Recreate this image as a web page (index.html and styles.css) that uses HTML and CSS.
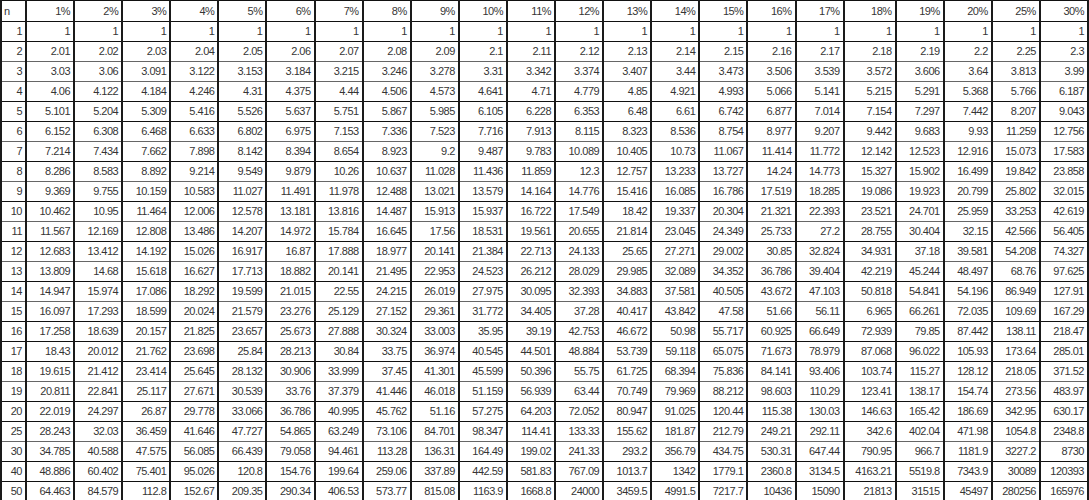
FILE: index.html
```html
<!DOCTYPE html>
<html>
<head>
<meta charset="utf-8">
<link rel="stylesheet" href="styles.css">
</head>
<body>
<table class="grid">
<colgroup><col class="c-n"><col><col><col><col><col><col><col><col><col><col><col><col><col><col><col><col><col><col class="c-wide"><col><col><col><col></colgroup>
<thead>
<tr class="head"><th class="n">n</th><th>1%</th><th>2%</th><th>3%</th><th>4%</th><th>5%</th><th>6%</th><th>7%</th><th>8%</th><th>9%</th><th>10%</th><th>11%</th><th>12%</th><th>13%</th><th>14%</th><th>15%</th><th>16%</th><th>17%</th><th>18%</th><th>19%</th><th>20%</th><th>25%</th><th>30%</th></tr>
</thead>
<tbody>
<tr class="dark"><td>1</td><td>1</td><td>1</td><td>1</td><td>1</td><td>1</td><td>1</td><td>1</td><td>1</td><td>1</td><td>1</td><td>1</td><td>1</td><td>1</td><td>1</td><td>1</td><td>1</td><td>1</td><td>1</td><td>1</td><td>1</td><td>1</td><td>1</td></tr>
<tr><td>2</td><td>2.01</td><td>2.02</td><td>2.03</td><td>2.04</td><td>2.05</td><td>2.06</td><td>2.07</td><td>2.08</td><td>2.09</td><td>2.1</td><td>2.11</td><td>2.12</td><td>2.13</td><td>2.14</td><td>2.15</td><td>2.16</td><td>2.17</td><td>2.18</td><td>2.19</td><td>2.2</td><td>2.25</td><td>2.3</td></tr>
<tr><td>3</td><td>3.03</td><td>3.06</td><td>3.091</td><td>3.122</td><td>3.153</td><td>3.184</td><td>3.215</td><td>3.246</td><td>3.278</td><td>3.31</td><td>3.342</td><td>3.374</td><td>3.407</td><td>3.44</td><td>3.473</td><td>3.506</td><td>3.539</td><td>3.572</td><td>3.606</td><td>3.64</td><td>3.813</td><td>3.99</td></tr>
<tr class="dark"><td>4</td><td>4.06</td><td>4.122</td><td>4.184</td><td>4.246</td><td>4.31</td><td>4.375</td><td>4.44</td><td>4.506</td><td>4.573</td><td>4.641</td><td>4.71</td><td>4.779</td><td>4.85</td><td>4.921</td><td>4.993</td><td>5.066</td><td>5.141</td><td>5.215</td><td>5.291</td><td>5.368</td><td>5.766</td><td>6.187</td></tr>
<tr class="dark"><td>5</td><td>5.101</td><td>5.204</td><td>5.309</td><td>5.416</td><td>5.526</td><td>5.637</td><td>5.751</td><td>5.867</td><td>5.985</td><td>6.105</td><td>6.228</td><td>6.353</td><td>6.48</td><td>6.61</td><td>6.742</td><td>6.877</td><td>7.014</td><td>7.154</td><td>7.297</td><td>7.442</td><td>8.207</td><td>9.043</td></tr>
<tr><td>6</td><td>6.152</td><td>6.308</td><td>6.468</td><td>6.633</td><td>6.802</td><td>6.975</td><td>7.153</td><td>7.336</td><td>7.523</td><td>7.716</td><td>7.913</td><td>8.115</td><td>8.323</td><td>8.536</td><td>8.754</td><td>8.977</td><td>9.207</td><td>9.442</td><td>9.683</td><td>9.93</td><td>11.259</td><td>12.756</td></tr>
<tr class="dark"><td>7</td><td>7.214</td><td>7.434</td><td>7.662</td><td>7.898</td><td>8.142</td><td>8.394</td><td>8.654</td><td>8.923</td><td>9.2</td><td>9.487</td><td>9.783</td><td>10.089</td><td>10.405</td><td>10.73</td><td>11.067</td><td>11.414</td><td>11.772</td><td>12.142</td><td>12.523</td><td>12.916</td><td>15.073</td><td>17.583</td></tr>
<tr><td>8</td><td>8.286</td><td>8.583</td><td>8.892</td><td>9.214</td><td>9.549</td><td>9.879</td><td>10.26</td><td>10.637</td><td>11.028</td><td>11.436</td><td>11.859</td><td>12.3</td><td>12.757</td><td>13.233</td><td>13.727</td><td>14.24</td><td>14.773</td><td>15.327</td><td>15.902</td><td>16.499</td><td>19.842</td><td>23.858</td></tr>
<tr class="dark"><td>9</td><td>9.369</td><td>9.755</td><td>10.159</td><td>10.583</td><td>11.027</td><td>11.491</td><td>11.978</td><td>12.488</td><td>13.021</td><td>13.579</td><td>14.164</td><td>14.776</td><td>15.416</td><td>16.085</td><td>16.786</td><td>17.519</td><td>18.285</td><td>19.086</td><td>19.923</td><td>20.799</td><td>25.802</td><td>32.015</td></tr>
<tr><td>10</td><td>10.462</td><td>10.95</td><td>11.464</td><td>12.006</td><td>12.578</td><td>13.181</td><td>13.816</td><td>14.487</td><td>15.913</td><td>15.937</td><td>16.722</td><td>17.549</td><td>18.42</td><td>19.337</td><td>20.304</td><td>21.321</td><td>22.393</td><td>23.521</td><td>24.701</td><td>25.959</td><td>33.253</td><td>42.619</td></tr>
<tr class="dark"><td>11</td><td>11.567</td><td>12.169</td><td>12.808</td><td>13.486</td><td>14.207</td><td>14.972</td><td>15.784</td><td>16.645</td><td>17.56</td><td>18.531</td><td>19.561</td><td>20.655</td><td>21.814</td><td>23.045</td><td>24.349</td><td>25.733</td><td>27.2</td><td>28.755</td><td>30.404</td><td>32.15</td><td>42.566</td><td>56.405</td></tr>
<tr><td>12</td><td>12.683</td><td>13.412</td><td>14.192</td><td>15.026</td><td>16.917</td><td>16.87</td><td>17.888</td><td>18.977</td><td>20.141</td><td>21.384</td><td>22.713</td><td>24.133</td><td>25.65</td><td>27.271</td><td>29.002</td><td>30.85</td><td>32.824</td><td>34.931</td><td>37.18</td><td>39.581</td><td>54.208</td><td>74.327</td></tr>
<tr class="dark"><td>13</td><td>13.809</td><td>14.68</td><td>15.618</td><td>16.627</td><td>17.713</td><td>18.882</td><td>20.141</td><td>21.495</td><td>22.953</td><td>24.523</td><td>26.212</td><td>28.029</td><td>29.985</td><td>32.089</td><td>34.352</td><td>36.786</td><td>39.404</td><td>42.219</td><td>45.244</td><td>48.497</td><td>68.76</td><td>97.625</td></tr>
<tr><td>14</td><td>14.947</td><td>15.974</td><td>17.086</td><td>18.292</td><td>19.599</td><td>21.015</td><td>22.55</td><td>24.215</td><td>26.019</td><td>27.975</td><td>30.095</td><td>32.393</td><td>34.883</td><td>37.581</td><td>40.505</td><td>43.672</td><td>47.103</td><td>50.818</td><td>54.841</td><td>54.196</td><td>86.949</td><td>127.91</td></tr>
<tr class="dark"><td>15</td><td>16.097</td><td>17.293</td><td>18.599</td><td>20.024</td><td>21.579</td><td>23.276</td><td>25.129</td><td>27.152</td><td>29.361</td><td>31.772</td><td>34.405</td><td>37.28</td><td>40.417</td><td>43.842</td><td>47.58</td><td>51.66</td><td>56.11</td><td>6.965</td><td>66.261</td><td>72.035</td><td>109.69</td><td>167.29</td></tr>
<tr class="dark"><td>16</td><td>17.258</td><td>18.639</td><td>20.157</td><td>21.825</td><td>23.657</td><td>25.673</td><td>27.888</td><td>30.324</td><td>33.003</td><td>35.95</td><td>39.19</td><td>42.753</td><td>46.672</td><td>50.98</td><td>55.717</td><td>60.925</td><td>66.649</td><td>72.939</td><td>79.85</td><td>87.442</td><td>138.11</td><td>218.47</td></tr>
<tr class="dark"><td>17</td><td>18.43</td><td>20.012</td><td>21.762</td><td>23.698</td><td>25.84</td><td>28.213</td><td>30.84</td><td>33.75</td><td>36.974</td><td>40.545</td><td>44.501</td><td>48.884</td><td>53.739</td><td>59.118</td><td>65.075</td><td>71.673</td><td>78.979</td><td>87.068</td><td>96.022</td><td>105.93</td><td>173.64</td><td>285.01</td></tr>
<tr><td>18</td><td>19.615</td><td>21.412</td><td>23.414</td><td>25.645</td><td>28.132</td><td>30.906</td><td>33.999</td><td>37.45</td><td>41.301</td><td>45.599</td><td>50.396</td><td>55.75</td><td>61.725</td><td>68.394</td><td>75.836</td><td>84.141</td><td>93.406</td><td>103.74</td><td>115.27</td><td>128.12</td><td>218.05</td><td>371.52</td></tr>
<tr class="dark"><td>19</td><td>20.811</td><td>22.841</td><td>25.117</td><td>27.671</td><td>30.539</td><td>33.76</td><td>37.379</td><td>41.446</td><td>46.018</td><td>51.159</td><td>56.939</td><td>63.44</td><td>70.749</td><td>79.969</td><td>88.212</td><td>98.603</td><td>110.29</td><td>123.41</td><td>138.17</td><td>154.74</td><td>273.56</td><td>483.97</td></tr>
<tr class="dark"><td>20</td><td>22.019</td><td>24.297</td><td>26.87</td><td>29.778</td><td>33.066</td><td>36.786</td><td>40.995</td><td>45.762</td><td>51.16</td><td>57.275</td><td>64.203</td><td>72.052</td><td>80.947</td><td>91.025</td><td>120.44</td><td>115.38</td><td>130.03</td><td>146.63</td><td>165.42</td><td>186.69</td><td>342.95</td><td>630.17</td></tr>
<tr><td>25</td><td>28.243</td><td>32.03</td><td>36.459</td><td>41.646</td><td>47.727</td><td>54.865</td><td>63.249</td><td>73.106</td><td>84.701</td><td>98.347</td><td>114.41</td><td>133.33</td><td>155.62</td><td>181.87</td><td>212.79</td><td>249.21</td><td>292.11</td><td>342.6</td><td>402.04</td><td>471.98</td><td>1054.8</td><td>2348.8</td></tr>
<tr class="dark"><td>30</td><td>34.785</td><td>40.588</td><td>47.575</td><td>56.085</td><td>66.439</td><td>79.058</td><td>94.461</td><td>113.28</td><td>136.31</td><td>164.49</td><td>199.02</td><td>241.33</td><td>293.2</td><td>356.79</td><td>434.75</td><td>530.31</td><td>647.44</td><td>790.95</td><td>966.7</td><td>1181.9</td><td>3227.2</td><td>8730</td></tr>
<tr class="dark"><td>40</td><td>48.886</td><td>60.402</td><td>75.401</td><td>95.026</td><td>120.8</td><td>154.76</td><td>199.64</td><td>259.06</td><td>337.89</td><td>442.59</td><td>581.83</td><td>767.09</td><td>1013.7</td><td>1342</td><td>1779.1</td><td>2360.8</td><td>3134.5</td><td>4163.21</td><td>5519.8</td><td>7343.9</td><td>30089</td><td>120393</td></tr>
<tr class="dark"><td>50</td><td>64.463</td><td>84.579</td><td>112.8</td><td>152.67</td><td>209.35</td><td>290.34</td><td>406.53</td><td>573.77</td><td>815.08</td><td>1163.9</td><td>1668.8</td><td>24000</td><td>3459.5</td><td>4991.5</td><td>7217.7</td><td>10436</td><td>15090</td><td>21813</td><td>31515</td><td>45497</td><td>280256</td><td>165976</td></tr>
</tbody>
</table>
</body>
</html>
```
FILE: styles.css
```css
html, body {
  margin: 0;
  padding: 0;
  background: #ffffff;
}

.grid {
  width: 1089px;
  table-layout: fixed;
  border-collapse: collapse;
  font-family: "Liberation Sans", Arial, Helvetica, sans-serif;
  font-size: 11px;
  letter-spacing: -0.5px;
  color: #353535;
}

.c-n { width: 25px; }
.c-wide { width: 52px; }

.grid th,
.grid td {
  border-top: 1px solid #666666;
  border-bottom: 1px solid #666666;
  border-left: 2px solid #1a1a1a;
  border-right: 2px solid #1a1a1a;
  padding: 0 3px 0 0;
  line-height: 19px;
  text-align: right;
  font-weight: normal;
  white-space: nowrap;
  overflow: hidden;
}

.grid .head th {
  line-height: 20px;
  border-top: 1px solid #111111;
  border-bottom: 1px solid #111111;
}

.grid .dark td {
  border-bottom-color: #111111;
}

.grid th.n {
  text-align: left;
  padding-left: 2px;
}
```
